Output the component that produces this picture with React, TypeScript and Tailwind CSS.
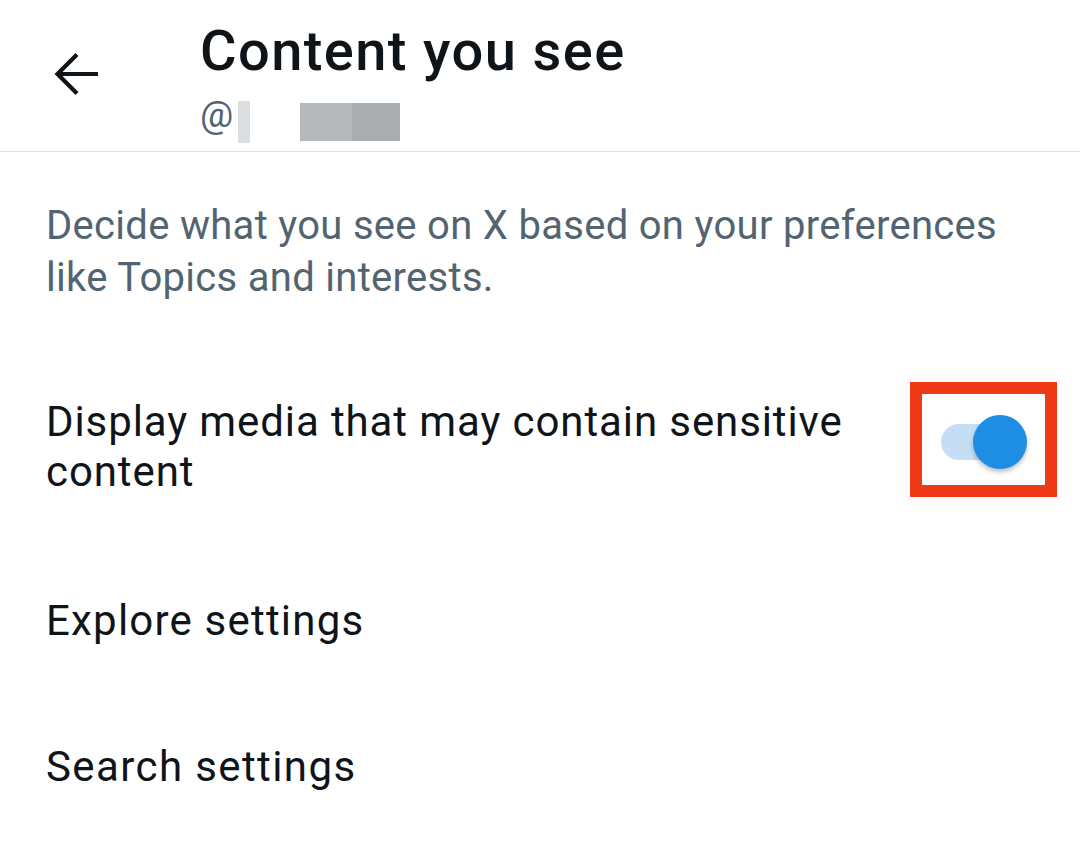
import React from "react";

export default function App() {
  return (
    <div
      className="w-[1080px] h-[856px] bg-white overflow-hidden text-[#0f1419]"
      style={{ fontFamily: "Roboto, 'Noto Sans', sans-serif" }}
    >
      {/* Header */}
      <div className="flex h-[152px] border-b-[1.5px] border-[#dde1e4]">
        <div className="w-[200px] flex justify-center pt-[52px] pr-[46px]">
          <svg width="46" height="44" viewBox="0 0 46 44" fill="none">
            <path d="M44 22H4" stroke="#0f1419" strokeWidth="4.2" />
            <path d="M23 2.5L3.5 22L23 41.5" stroke="#0f1419" strokeWidth="4.2" />
          </svg>
        </div>
        <div className="flex flex-col pt-[19px]">
          <div className="text-[56px] leading-[64px] font-medium tracking-[1.4px]">Content you see</div>
          <div className="flex items-center mt-[13px] h-[48px]">
            <span className="text-[37px] leading-[40px] text-[#536471] mt-[-10px]">@</span>
            <div className="ml-[5px] mt-[4px] w-[12px] h-[42px] bg-[#dcdfe1]" />
            <div className="ml-[50px] mt-[4px] w-[52px] h-[38px] bg-[#b6b9bc]" />
            <div className="mt-[4px] w-[48px] h-[38px] bg-[#aaaeb1]" />
          </div>
        </div>
      </div>

      {/* Content */}
      <div className="pl-[46px] pr-[23px]">
        <p className="mt-[48px] text-[40px] leading-[52px] tracking-[0.3px] text-[#536471] w-[975px]">
          Decide what you see on X based on your preferences like Topics and interests.
        </p>

        <div className="mt-[93px] flex justify-between items-start">
          <div className="text-[42px] leading-[50px] tracking-[0.9px] w-[830px]">
            Display media that may contain sensitive content
          </div>
          <div className="mt-[-15px] w-[147px] h-[115px] border-[12px] border-[#f03a17] flex items-center justify-center">
            <div className="relative w-[80px] h-[36px] ml-[-5px] mt-[4px] rounded-full bg-[#c6def5]">
              <div className="absolute left-[32px] top-[-9px] w-[54px] h-[54px] rounded-full bg-[#1d8ee3] shadow-[0_3px_4px_rgba(0,0,0,0.25)]" />
            </div>
          </div>
        </div>

        <div className="mt-[99px] text-[42px] leading-[50px] tracking-[1.2px]">Explore settings</div>
        <div className="mt-[96px] text-[42px] leading-[50px] tracking-[1.4px]">Search settings</div>
      </div>
    </div>
  );
}
